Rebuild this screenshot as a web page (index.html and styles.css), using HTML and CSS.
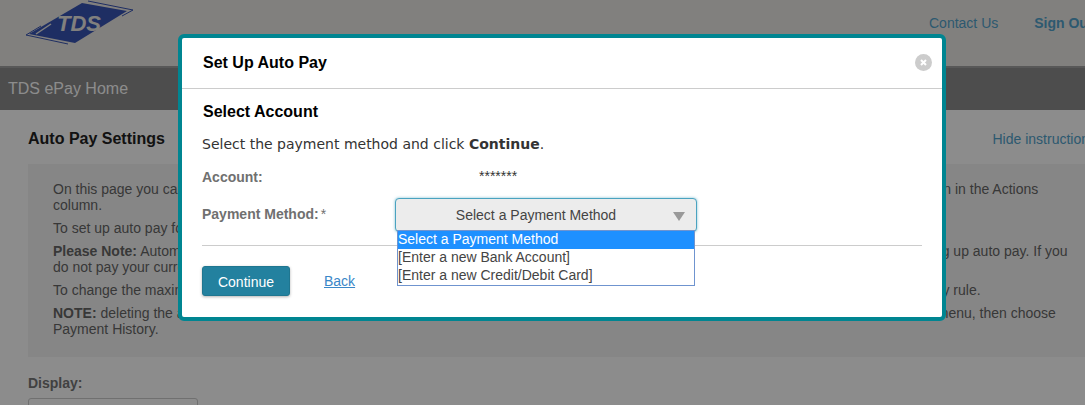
FILE: index.html
```html
<!DOCTYPE html>
<html lang="en">
<head>
    <meta charset="UTF-8">
    <meta name="viewport" content="width=device-width, initial-scale=1.0">
    <title>TDS ePay - Auto Pay Settings</title>
    <link rel="stylesheet" href="styles.css">
</head>
<body>

<div class="page">
    <header class="top-bar">
        <svg class="logo" width="112" height="46" viewBox="0 0 112 46">
            <polygon points="6,34 59,3 104,11 52,43" fill="#3855b4"/>
            <polyline points="3,35 45,44" fill="none" stroke="#3855b4" stroke-width="1"/>
            <polyline points="3,35 18,26" fill="none" stroke="#3855b4" stroke-width="1"/>
            <polyline points="65,1 110,10 99,16" fill="none" stroke="#3855b4" stroke-width="1"/>
            <polyline points="13,34 28,24" fill="none" stroke="#ece9e5" stroke-width="1.5"/>
            <text x="34" y="31" class="logo-text">TDS</text>
            <circle cx="82" cy="32" r="1" fill="none" stroke="#ece9e5" stroke-width="0.5"/>
        </svg>
        <nav class="top-links">
            <a href="#" class="top-link">Contact Us</a>
            <a href="#" class="top-link sign-out">Sign Out</a>
        </nav>
    </header>

    <div class="nav-bar">TDS ePay Home</div>

    <main class="content">
        <div class="content-head">
            <h2>Auto Pay Settings</h2>
            <a href="#" class="hide-link">Hide instructions</a>
        </div>
        <div class="instructions">
            <p>On this page you can set up auto pay for your accounts, view and update existing auto pay rules, or delete any rule by clicking the buttons shown in the Actions column.</p>
            <p>To set up auto pay for an account, click the Add button and follow the steps.</p>
            <p><b>Please Note:</b> Automatic payments will begin upon your next monthly bill, so please make sure you review your current balance soon after setting up auto pay. If you do not pay your current balance, a late fee may apply.</p>
            <p>To change the maximum payment amount or payment method for an existing rule, click the Edit in the Actions column of the row for that auto pay rule.</p>
            <p><b>NOTE:</b> deleting the auto pay plan does not cancel all payments that are already pending. To view those payments, select Account from the left menu, then choose Payment History.</p>
        </div>
        <label class="display-label">Display:</label>
        <div class="display-select"></div>
    </main>
</div>

<div class="overlay"></div>

<div class="modal">
    <div class="modal-head">
        <h3>Set Up Auto Pay</h3>
        <svg class="close" width="17" height="17" viewBox="0 0 17 17">
            <circle cx="8.5" cy="8.5" r="8.5" fill="#cccccc"/>
            <path d="M6 6 L11 11 M11 6 L6 11" stroke="#ffffff" stroke-width="2"/>
        </svg>
    </div>
    <div class="modal-body">
        <h4>Select Account</h4>
        <p class="lead">Select the payment method and click <b>Continue</b>.</p>
        <div class="form-row account-row">
            <span class="form-label">Account:</span>
            <span class="account-value">*******</span>
        </div>
        <div class="form-row method-row">
            <span class="form-label">Payment Method:<span class="required">*</span></span>
            <div class="select-wrap">
                <div class="select-box">
                    Select a Payment Method
                    <span class="select-arrow"></span>
                </div>
                <ul class="select-list">
                    <li class="selected">Select a Payment Method</li>
                    <li>[Enter a new Bank Account]</li>
                    <li>[Enter a new Credit/Debit Card]</li>
                </ul>
            </div>
        </div>
        <div class="actions">
            <button class="btn-continue">Continue</button>
            <a href="#" class="back-link">Back</a>
        </div>
    </div>
</div>

</body>
</html>
```

FILE: styles.css
```css
* {
    box-sizing: border-box;
}

html, body {
    height: 100%;
}

body {
    margin: 0;
    overflow: hidden;
    background-color: #ffffff;
    font-family: "Liberation Sans", Arial, sans-serif;
    font-size: 14px;
    color: #666666;
}

.page {
    width: 1100px;
    height: 405px;
    overflow: hidden;
}

.top-bar {
    display: flex;
    justify-content: space-between;
    height: 66px;
    background-color: #ece9e5;
}

.logo {
    margin: 0 0 0 23px;
}

.logo-text {
    font-family: "Liberation Sans", Arial, sans-serif;
    font-size: 22px;
    font-weight: bold;
    font-style: italic;
    fill: #ece9e5;
}

.top-links {
    display: flex;
    gap: 36px;
    padding: 15px 0 0 0;
    width: 171px;
}

.top-link {
    color: #52a3cc;
    text-decoration: none;
    white-space: nowrap;
}

.sign-out {
    font-weight: bold;
}

.nav-bar {
    height: 44px;
    padding: 12px 8px 0;
    background-color: #8c8c8c;
    border-top: 2px solid #a0a0a0;
    font-size: 16px;
    color: #ffffff;
}

.content {
    padding: 0 15px 0 28px;
}

.content-head {
    display: flex;
    justify-content: space-between;
    align-items: center;
    padding: 20px 0 16px;
}

.content-head h2 {
    margin: 0;
    font-size: 16px;
    color: #222222;
}

.hide-link {
    color: #52a3cc;
    text-decoration: none;
    margin-right: -11px;
    white-space: nowrap;
}

.instructions {
    background-color: #f5f5f5;
    padding: 17px 15px 20px 25px;
    height: 193px;
}

.instructions p {
    margin: 0 0 7px;
    line-height: 16px;
}

.display-label {
    display: block;
    margin-top: 18px;
    font-weight: bold;
    color: #777777;
}

.display-select {
    margin-top: 7px;
    width: 170px;
    height: 30px;
    border: 1px solid #cccccc;
    border-radius: 3px;
}

.overlay {
    position: fixed;
    top: 0;
    left: 0;
    right: 0;
    bottom: 0;
    background-color: rgba(0, 0, 0, 0.45);
}

.modal {
    position: fixed;
    top: 34px;
    left: 178px;
    width: 768px;
    height: 287px;
    background-color: #ffffff;
    border: 4px solid #008591;
    border-radius: 6px;
}

.modal-head {
    display: flex;
    justify-content: space-between;
    align-items: center;
    height: 51px;
    padding: 0 10px 0 21px;
    border-bottom: 1px solid #cccccc;
}

.modal-head h3 {
    margin: 0;
    font-size: 16px;
    color: #000000;
}

.close {
    margin-bottom: 2px;
}

.modal-body {
    padding: 14px 20px 0 20px;
}

.modal-body h4 {
    margin: 0 0 0 1px;
    font-size: 16px;
    line-height: 18px;
    color: #000000;
}

.lead {
    margin: 14px 0 0;
    font-family: "DejaVu Sans", Verdana, sans-serif;
    font-size: 14px;
    line-height: 18px;
    color: #333333;
}

.form-row {
    display: flex;
}

.account-row {
    margin-top: 16px;
}

.form-label {
    width: 193px;
    font-weight: bold;
    color: #707070;
}

.required {
    margin-left: 2px;
    font-weight: normal;
}

.account-value {
    margin-left: 84px;
    line-height: 14px;
    color: #333333;
}

.method-row {
    margin-top: 13px;
    align-items: flex-start;
}

.method-row .form-label {
    margin-top: 8px;
}

.select-wrap {
    position: relative;
    width: 302px;
}

.select-box {
    position: relative;
    height: 34px;
    line-height: 32px;
    padding-right: 20px;
    text-align: center;
    background-color: #ececec;
    border: 1px solid #4aa3c0;
    border-radius: 4px;
    box-shadow: 0 0 3px rgba(74, 163, 192, 0.7);
    color: #444444;
}

.select-arrow {
    position: absolute;
    top: 13px;
    right: 11px;
    border-left: 6px solid transparent;
    border-right: 6px solid transparent;
    border-top: 9px solid #999999;
}

.select-list {
    position: absolute;
    top: 32px;
    left: 2px;
    width: 298px;
    margin: 0;
    padding: 0;
    list-style: none;
    background-color: #ffffff;
    border: 1px solid #6f94cf;
    color: #444444;
    z-index: 2;
}

.select-list li {
    height: 18px;
    line-height: 17px;
    white-space: nowrap;
}

.select-list .selected {
    background-color: #1e90ff;
    color: #ffffff;
}

.actions {
    display: flex;
    align-items: center;
    gap: 34px;
    margin-top: 13px;
    padding-top: 20px;
    border-top: 1px solid #cccccc;
}

.btn-continue {
    width: 88px;
    height: 30px;
    padding: 1px 0 0;
    background-color: #23819f;
    border: 1px solid #1f7690;
    border-radius: 3px;
    box-shadow: 0 1px 3px rgba(0, 0, 0, 0.3);
    font-family: "Liberation Sans", Arial, sans-serif;
    font-size: 14px;
    color: #ffffff;
}

.back-link {
    color: #3a87c8;
}
```
